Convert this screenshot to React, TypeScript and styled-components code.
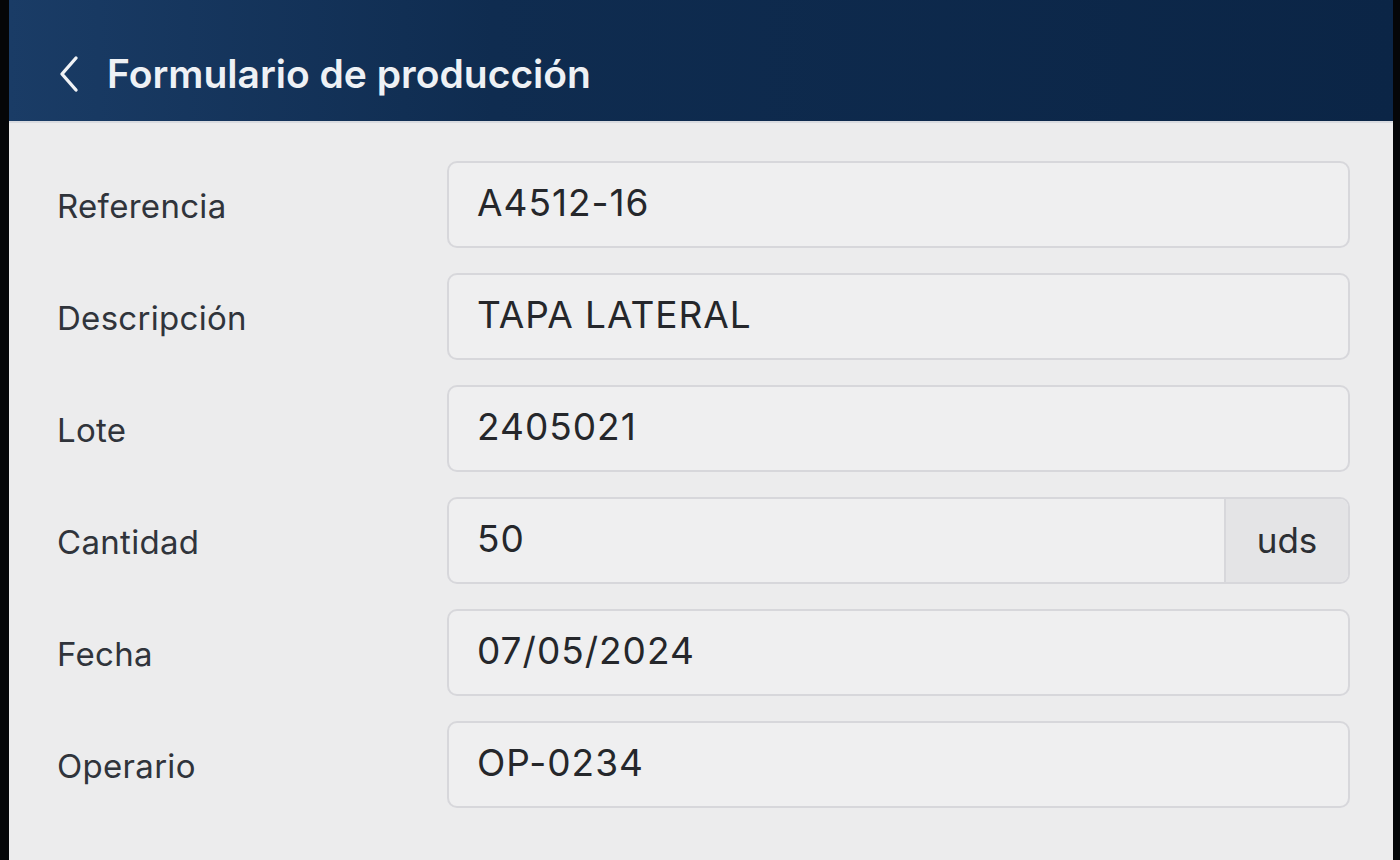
import React from "react";
import styled, { createGlobalStyle } from "styled-components";

const GlobalStyle = createGlobalStyle`
  html, body {
    margin: 0;
    padding: 0;
    background: #050608;
  }
  * {
    box-sizing: border-box;
  }
`;

const Screen = styled.div`
  height: 860px;
  margin: 0 7px 0 9px;
  background: #ececed;
  font-family: Inter, "Liberation Sans", sans-serif;
  display: flex;
  flex-direction: column;
  overflow: hidden;
`;

const Header = styled.header`
  height: 123px;
  flex-shrink: 0;
  display: flex;
  align-items: center;
  padding: 26px 0 0 46px;
  gap: 24px;
  background: linear-gradient(90deg, #1a3c66 0%, #0f2c50 35%, #0b2546 100%);
  border-bottom: 2px solid #d9dbe0;
`;

const BackButton = styled.button`
  border: none;
  background: none;
  padding: 0;
  display: flex;
  cursor: pointer;
`;

const Title = styled.h1`
  margin: 0;
  font-size: 39px;
  font-weight: 600;
  color: #eef1f5;
  letter-spacing: 0;
`;

const Form = styled.form`
  display: flex;
  flex-direction: column;
  gap: 25px;
  padding: 38px 43px 0 48px;
`;

const Row = styled.div`
  display: grid;
  grid-template-columns: 390px 1fr;
  align-items: center;
`;

const Label = styled.label`
  font-size: 33px;
  letter-spacing: 0.3px;
  color: #30343b;
  padding-top: 2px;
`;

const Field = styled.div`
  height: 87px;
  display: flex;
  border: 2px solid #d7d7db;
  border-radius: 10px;
  background: #efeff0;
  overflow: hidden;
`;

const Value = styled.div`
  flex: 1;
  display: flex;
  align-items: center;
  padding-left: 28px;
  font-size: 37px;
  letter-spacing: 1px;
  color: #25272b;
  padding-bottom: 4px;
`;

const Unit = styled.div`
  width: 124px;
  display: flex;
  align-items: center;
  justify-content: center;
  border-left: 2px solid #d7d7db;
  background: #e4e4e6;
  font-size: 35px;
  color: #2c2f34;
  padding-bottom: 2px;
`;

type FieldRow = { label: string; value: string; unit?: string };

const rows: FieldRow[] = [
  { label: "Referencia", value: "A4512-16" },
  { label: "Descripción", value: "TAPA LATERAL" },
  { label: "Lote", value: "2405021" },
  { label: "Cantidad", value: "50", unit: "uds" },
  { label: "Fecha", value: "07/05/2024" },
  { label: "Operario", value: "OP-0234" },
];

const ChevronLeft = () => (
  <svg width="28" height="40" viewBox="0 0 28 40" fill="none">
    <path
      d="M21 4 L7 20 L21 36"
      stroke="#f1f3f6"
      strokeWidth="3.4"
      strokeLinecap="round"
      strokeLinejoin="round"
    />
  </svg>
);

const App: React.FC = () => {
  return (
    <>
      <GlobalStyle />
      <Screen>
        <Header>
          <BackButton type="button" aria-label="Volver">
            <ChevronLeft />
          </BackButton>
          <Title>Formulario de producción</Title>
        </Header>
        <Form>
          {rows.map((row) => (
            <Row key={row.label}>
              <Label>{row.label}</Label>
              <Field>
                <Value>{row.value}</Value>
                {row.unit && <Unit>{row.unit}</Unit>}
              </Field>
            </Row>
          ))}
        </Form>
      </Screen>
    </>
  );
};

export default App;
